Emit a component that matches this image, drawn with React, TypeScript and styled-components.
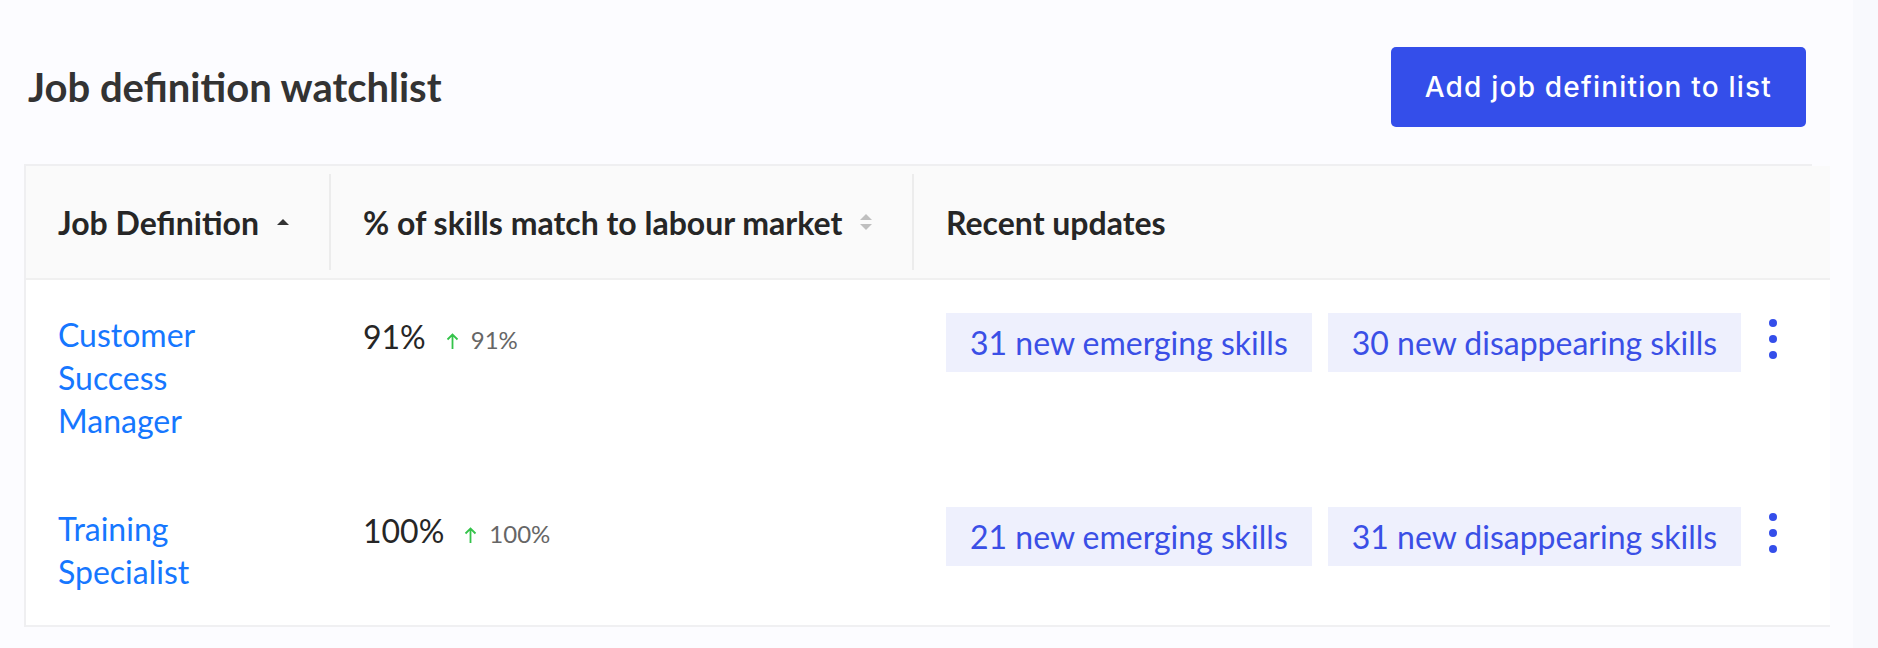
import React from 'react';
import styled, { createGlobalStyle } from 'styled-components';

const GlobalStyle = createGlobalStyle`
  html, body {
    margin: 0;
    padding: 0;
    background: #f8f9fd;
  }
  body {
    font-family: Lato, "Noto Sans", sans-serif;
    -webkit-font-smoothing: antialiased;
  }
  * { box-sizing: border-box; }
`;

const Page = styled.main`
  width: 1853px;
  min-height: 648px;
  background: #fcfcff;
  padding-top: 47px;
`;

const TopBar = styled.header`
  display: flex;
  align-items: center;
  justify-content: space-between;
  height: 80px;
  padding: 0 47px 0 28px;
`;

const Title = styled.h1`
  margin: 0;
  font-family: Lato, sans-serif;
  font-weight: 700;
  font-size: 40px;
  color: #333333;
`;

const PrimaryButton = styled.button`
  height: 80px;
  padding: 0 34px;
  border: none;
  border-radius: 5px;
  background: #344eea;
  color: #ffffff;
  font-family: Inter, "Noto Sans", sans-serif;
  font-weight: 500;
  font-size: 28px;
  letter-spacing: 1.2px;
  cursor: pointer;
`;

const TableCard = styled.section`
  margin: 37px 0 0 24px;
  width: 1788px;
  border-top: 2px solid #efeff1;
  border-left: 2px solid #efeff1;
`;

const Table = styled.div`
  width: 1804px;
`;

const columns = '305px 583px 1fr';

const HeaderRow = styled.div`
  display: grid;
  grid-template-columns: ${columns};
  height: 114px;
  background: #fafafa;
  border-bottom: 2px solid #f0f0f0;
`;

const HeaderCell = styled.div<{ $divider?: boolean }>`
  display: flex;
  align-items: center;
  margin: 8px 0;
  padding: 0 32px;
  border-right: ${(p) => (p.$divider ? '2px solid #ececec' : 'none')};
  font-weight: 700;
  font-size: 32px;
  color: #262626;
  white-space: nowrap;
`;

const SorterStack = styled.span`
  display: flex;
  flex-direction: column;
  gap: 4px;
  margin-left: 18px;
`;

const BodyRow = styled.div<{ $last?: boolean }>`
  display: grid;
  grid-template-columns: ${columns};
  background: #ffffff;
  border-bottom: ${(p) => (p.$last ? '2px solid #f0f0f2' : 'none')};
`;

const BodyCell = styled.div`
  padding: 33px 40px 32px 32px;
`;

const NameLink = styled.a`
  display: block;
  font-size: 32px;
  line-height: 43px;
  color: #1677ff;
  text-decoration: none;
`;

const PercentCell = styled.div`
  display: flex;
  align-items: baseline;
  padding: 33px 32px 32px 32px;
  line-height: 48px;
`;

const BigPercent = styled.span`
  font-size: 32px;
  color: #262626;
`;

const ArrowIcon = styled.svg`
  margin-left: 20px;
  flex: none;
`;

const SmallPercent = styled.span`
  margin-left: 12px;
  font-size: 24px;
  color: #666666;
`;

const UpdatesCell = styled.div`
  display: flex;
  align-items: flex-start;
  gap: 16px;
  padding: 33px 32px 32px 32px;
`;

const Chip = styled.span`
  padding: 8px 24px;
  line-height: 43px;
  font-size: 32px;
  background: #eef0fd;
  color: #3a4fe6;
  white-space: nowrap;
`;

const MoreButton = styled.button`
  width: 32px;
  padding: 6px 0 0;
  border: none;
  background: transparent;
  display: flex;
  justify-content: center;
  cursor: pointer;
`;

const Caret = ({ dir, color }: { dir: 'up' | 'down'; color: string }) => (
  <svg width="12" height="6" viewBox="0 0 12 6">
    <path d={dir === 'up' ? 'M0 6 L6 0 L12 6 Z' : 'M0 0 L6 6 L12 0 Z'} fill={color} />
  </svg>
);

const UpArrow = () => (
  <ArrowIcon width="13" height="16" viewBox="0 0 13 16">
    <path d="M6.5 1.5 V16 M1.5 6.5 L6.5 1.5 L11.5 6.5" stroke="#34c34a" strokeWidth="1.8" fill="none" />
  </ArrowIcon>
);

const Dots = () => (
  <svg width="8" height="40" viewBox="0 0 8 40">
    <circle cx="4" cy="4" r="4" fill="#344eea" />
    <circle cx="4" cy="20" r="4" fill="#344eea" />
    <circle cx="4" cy="36" r="4" fill="#344eea" />
  </svg>
);

type Row = {
  name: string;
  pct: string;
  emerging: number;
  disappearing: number;
};

const rows: Row[] = [
  { name: 'Customer Success Manager', pct: '91%', emerging: 31, disappearing: 30 },
  { name: 'Training Specialist', pct: '100%', emerging: 21, disappearing: 31 },
];

export default function App() {
  return (
    <>
      <GlobalStyle />
      <Page>
        <TopBar>
          <Title>Job definition watchlist</Title>
          <PrimaryButton>Add job definition to list</PrimaryButton>
        </TopBar>
        <TableCard>
          <Table>
            <HeaderRow>
              <HeaderCell $divider>
                Job Definition
                <SorterStack>
                  <Caret dir="up" color="#333333" />
                </SorterStack>
              </HeaderCell>
              <HeaderCell $divider>
                % of skills match to labour market
                <SorterStack>
                  <Caret dir="up" color="#bfbfbf" />
                  <Caret dir="down" color="#bfbfbf" />
                </SorterStack>
              </HeaderCell>
              <HeaderCell>Recent updates</HeaderCell>
            </HeaderRow>
            {rows.map((r, i) => (
              <BodyRow key={r.name} $last={i === rows.length - 1}>
                <BodyCell>
                  <NameLink href="#">{r.name}</NameLink>
                </BodyCell>
                <PercentCell>
                  <BigPercent>{r.pct}</BigPercent>
                  <UpArrow />
                  <SmallPercent>{r.pct}</SmallPercent>
                </PercentCell>
                <UpdatesCell>
                  <Chip>{r.emerging} new emerging skills</Chip>
                  <Chip>{r.disappearing} new disappearing skills</Chip>
                  <MoreButton aria-label="More actions">
                    <Dots />
                  </MoreButton>
                </UpdatesCell>
              </BodyRow>
            ))}
          </Table>
        </TableCard>
      </Page>
    </>
  );
}
